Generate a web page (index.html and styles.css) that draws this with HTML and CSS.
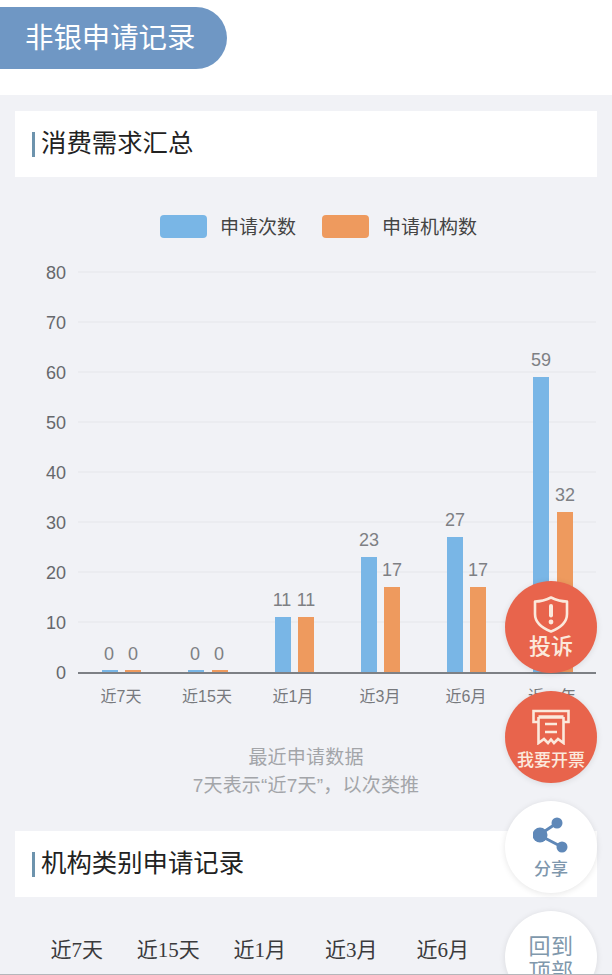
FILE: index.html
```html
<!DOCTYPE html>
<html lang="zh-CN">
<head>
<meta charset="utf-8">
<title>非银申请记录</title>
<link rel="stylesheet" href="styles.css">
</head>
<body>
<div class="page">
  <header class="top">
    <h1 class="pill">非银申请记录</h1>
  </header>
  <main class="content">
    <h2 class="card-title"><span class="mark"></span><span class="title-text">消费需求汇总</span></h2>
    <div class="legend">
      <span class="swatch blue"></span><span class="legend-label first">申请次数</span>
      <span class="swatch orange"></span><span class="legend-label">申请机构数</span>
    </div>
    <svg class="chart" width="612" height="470" viewBox="0 250 612 470">
      <g class="grid">
        <line x1="78" x2="596" y1="272" y2="272"/><line x1="78" x2="596" y1="322" y2="322"/>
        <line x1="78" x2="596" y1="372" y2="372"/><line x1="78" x2="596" y1="422" y2="422"/>
        <line x1="78" x2="596" y1="472" y2="472"/><line x1="78" x2="596" y1="522" y2="522"/>
        <line x1="78" x2="596" y1="572" y2="572"/><line x1="78" x2="596" y1="622" y2="622"/>
      </g>
      <g class="ylabels">
        <text x="66" y="279">80</text><text x="66" y="329">70</text><text x="66" y="379">60</text>
        <text x="66" y="429">50</text><text x="66" y="479">40</text><text x="66" y="529">30</text>
        <text x="66" y="579">20</text><text x="66" y="629">10</text><text x="66" y="679">0</text>
      </g>
      <g class="bar-blue">
        <rect x="102" y="670" width="16" height="3"/><rect x="188" y="670" width="16" height="3"/>
        <rect x="275" y="617" width="16" height="55"/><rect x="361" y="557" width="16" height="115"/>
        <rect x="447" y="537" width="16" height="135"/><rect x="533" y="377" width="16" height="295"/>
      </g>
      <g class="bar-orange">
        <rect x="125" y="670" width="16" height="3"/><rect x="212" y="670" width="16" height="3"/>
        <rect x="298" y="617" width="16" height="55"/><rect x="384" y="587" width="16" height="85"/>
        <rect x="470" y="587" width="16" height="85"/><rect x="557" y="512" width="16" height="160"/>
      </g>
      <line class="axis" x1="78" x2="596" y1="673" y2="673"/>
      <g class="values">
        <text x="109" y="660">0</text><text x="133" y="660">0</text>
        <text x="195" y="660">0</text><text x="219" y="660">0</text>
        <text x="282" y="606">11</text><text x="306" y="606">11</text>
        <text x="369" y="546">23</text><text x="392" y="576">17</text>
        <text x="455" y="526">27</text><text x="478" y="576">17</text>
        <text x="541" y="366">59</text><text x="565" y="501">32</text>
      </g>
      <g class="xlabels">
        <text x="121" y="702">近7天</text><text x="207" y="702">近15天</text><text x="293" y="702">近1月</text>
        <text x="380" y="702">近3月</text><text x="466" y="702">近6月</text><text x="552" y="702">近一年</text>
      </g>
    </svg>
    <p class="note">最近申请数据<br>7天表示“近7天”，以次类推</p>
    <h2 class="card-title second"><span class="mark"></span><span class="title-text">机构类别申请记录</span></h2>
    <div class="tabs">
      <span>近7天</span><span>近15天</span><span>近1月</span><span>近3月</span><span>近6月</span>
    </div>
  </main>

  <a class="fab red complain">
    <svg class="ico-shield" width="36" height="37" viewBox="0 0 36 37">
      <path d="M18 1.5 C24 4.5 29 5.5 34 5.5 V18 C34 27 27 32 18 35.5 C9 32 2 27 2 18 V5.5 C7 5.5 12 4.5 18 1.5 Z"/>
      <rect class="solid" x="16" y="8" width="4" height="13.5" rx="2"/>
      <circle class="solid" cx="18" cy="26" r="2.4"/>
    </svg>
    <span class="fab-text large">投诉</span>
  </a>
  <a class="fab red invoice">
    <svg class="ico-receipt" width="38" height="36" viewBox="0 0 38 36">
      <path d="M6.5 13 H1.5 V2 H36.5 V13 H31.5"/>
      <path class="slot" d="M6.5 8 H31.5"/>
      <path d="M6.5 8 V34 L12 30 L16 34 L19 30.5 L22 34 L26 30 L31.5 34 V8"/>
      <path d="M13 15 H25 M13 23 H25"/>
    </svg>
    <span class="fab-text small">我要开票</span>
  </a>
  <a class="fab white share">
    <svg width="36" height="38" viewBox="0 0 36 38">
      <path class="share-line" d="M6 18 L24 6 M6 18 L29 30"/>
      <circle class="share-dot" cx="7" cy="18" r="7.5"/>
      <circle class="share-dot" cx="24" cy="6" r="5.5"/>
      <circle class="share-dot" cx="29" cy="30" r="5.5"/>
    </svg>
    <span class="fab-text share-text">分享</span>
  </a>
  <a class="fab white totop"><span class="top-text">回到<br>顶部</span></a>
  <div class="bottom-edge"></div>
</div>
</body>
</html>
```
FILE: styles.css
```css
* { box-sizing: border-box; }
html, body { margin: 0; padding: 0; }
body {
  width: 612px;
  height: 975px;
  overflow: hidden;
  font-family: "Liberation Sans", "Noto Sans CJK SC", sans-serif;
  background: #f1f2f6;
}
.page { position: relative; width: 612px; height: 975px; overflow: hidden; }
.top { height: 95px; background: #fff; padding-top: 7px; }
.pill {
  margin: 0;
  width: 227px;
  height: 62px;
  padding-left: 25px;
  border-radius: 0 31px 31px 0;
  background: #6f97c4;
  color: #fff;
  font-size: 28.4px;
  font-weight: 400;
  line-height: 62px;
}
.content { background: #f1f2f6; padding-top: 16px; }
.card-title {
  display: flex;
  align-items: center;
  margin: 0 15px 0 15px;
  height: 66px;
  padding-left: 16px;
  background: #fff;
  color: #222;
  font-size: 25.4px;
  font-weight: 400;
}
.title-text { margin-bottom: 6px; }
.mark { width: 3.5px; height: 25px; margin: 0 6px 0 0.5px; background: #6d93ad; }
.legend {
  display: flex;
  align-items: center;
  height: 24px;
  margin-top: 37px;
  padding-left: 160px;
  color: #444;
  font-size: 19px;
}
.legend-label { margin-bottom: 2px; }
.swatch { width: 47px; height: 23px; border-radius: 4px; margin-right: 13px; }
.swatch.blue { background: #79b6e6; }
.swatch.orange { background: #ee9a5e; }
.legend-label.first { margin-right: 26px; }
.chart { display: block; margin-top: 12px; }
.grid line { stroke: #e5e6ea; stroke-width: 1; }
.axis { stroke: #7d8085; stroke-width: 2; }
.ylabels text { text-anchor: end; font-size: 18px; fill: #66686c; }
.values text { text-anchor: middle; font-size: 18px; fill: #7e8084; }
.xlabels text { text-anchor: middle; font-size: 16px; fill: #77797d; }
.bar-blue rect { fill: #79b6e6; }
.bar-orange rect { fill: #ee9a5e; }
.note {
  margin: 24px 0 0;
  text-align: center;
  color: #a3a5a9;
  font-size: 19px;
  line-height: 28px;
  letter-spacing: 0.2px;
}
.card-title.second { margin-top: 31px; }
.tabs {
  display: grid;
  grid-template-columns: repeat(5, 91.5px);
  padding: 39px 0 0 31px;
  font-family: "Liberation Serif", "Noto Sans CJK SC", serif;
  font-size: 21px;
  line-height: 28px;
  color: #3a3a3c;
  justify-items: center;
}
.fab {
  position: absolute;
  left: 505px;
  width: 92px;
  height: 92px;
  border-radius: 50%;
  display: flex;
  flex-direction: column;
  align-items: center;
  box-shadow: 0 1px 6px rgba(0, 0, 0, 0.1);
}
.fab.red { background: #e8644c; color: #fbe9dc; }
.fab.white { background: #fff; }
.complain { top: 581px; padding-top: 15px; }
.invoice { top: 691px; padding-top: 18px; }
.share { top: 801px; padding-top: 16px; }
.totop { top: 911px; padding-top: 23px; }
.fab-text { display: block; }
.fab-text.large { font-size: 22px; font-weight: 500; line-height: 28px; margin-top: 0; }
.fab-text.small { font-size: 17px; font-weight: 500; line-height: 22px; margin-top: 5px; white-space: nowrap; }
.share-text { font-size: 17px; font-weight: 500; line-height: 22px; margin-top: 4px; color: #7e97ad; }
.top-text { font-size: 22px; line-height: 25px; text-align: center; color: #8098ac; letter-spacing: 0.5px; }
.ico-shield path { fill: none; stroke: #fbe9dc; stroke-width: 2.6; stroke-linejoin: round; }
.ico-shield .solid { fill: #fbe9dc; }
.ico-receipt path { fill: none; stroke: #fbe9dc; stroke-width: 2.6; stroke-linejoin: miter; }
.ico-receipt .slot { stroke-width: 3.5; }
.share-line { stroke: #5f88b8; stroke-width: 3; fill: none; }
.share-dot { fill: #5f88b8; }
.bottom-edge { position: absolute; left: 0; right: 0; bottom: 0; height: 1px; background: #b5b6ba; }
```
